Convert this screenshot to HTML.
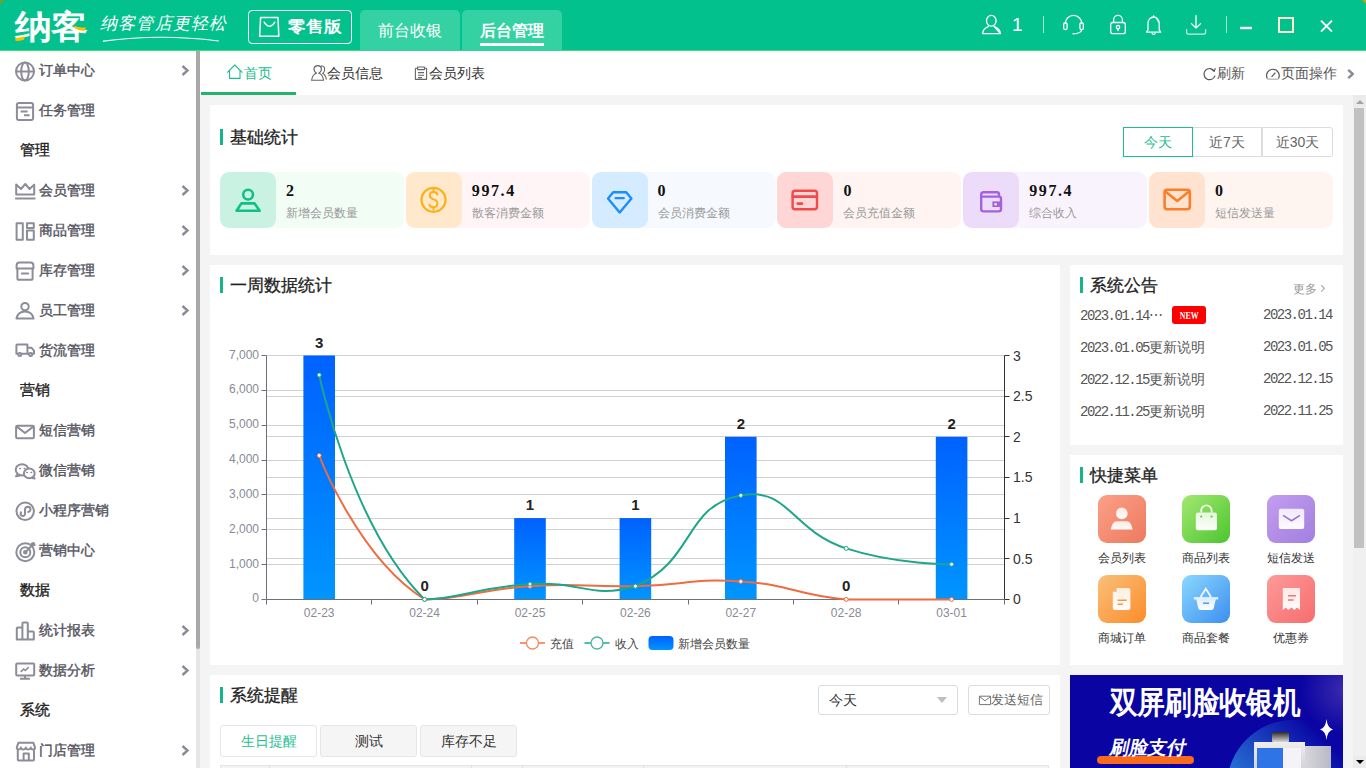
<!DOCTYPE html>
<html><head><meta charset="utf-8">
<style>
*{margin:0;padding:0;box-sizing:border-box}
html,body{width:1366px;height:768px;overflow:hidden;background:#f4f4f4;font-family:"Liberation Sans",sans-serif;color:#333}
.abs{position:absolute}
#hdr{position:absolute;left:0;top:0;width:1366px;height:51px;background:#02c18c;border-bottom:1px solid #45d978}
.logo{position:absolute;left:15px;top:7px;font-size:33px;font-weight:900;color:#fff;letter-spacing:-1px;line-height:40px;transform:scaleX(1.12);transform-origin:0 0}
.slogan{position:absolute;left:100px;top:12px;font-size:17px;color:#fff;letter-spacing:1.2px;font-style:italic;font-weight:300;line-height:24px;font-family:"Liberation Serif",serif}
.retail{position:absolute;left:248px;top:10px;width:104px;height:34px;border:1.5px solid #fff;border-radius:4px}
.retail span{position:absolute;left:39px;top:6px;font-size:16px;font-weight:900;color:#fff;line-height:20px;letter-spacing:0.5px;transform:scaleX(1.1);transform-origin:0 50%}
.htab{position:absolute;top:10px;width:100px;height:41px;background:#34d1a3;border-radius:5px 5px 0 0;color:#fff;font-size:16px;text-align:center;line-height:41px}
.side{position:absolute;left:0;top:51px;width:196px;height:717px;background:#fff}
.sb{position:absolute;left:196px;top:51px;width:4px;height:717px;background:#e6e6e6}
.sbt{position:absolute;left:196px;top:51px;width:4px;height:598px;background:#a9a9a9;border-radius:0 0 2px 2px}
.mi{position:absolute;left:39px;font-size:14px;font-weight:500;color:#55555f;line-height:20px;white-space:nowrap;-webkit-text-stroke:0.4px #55555f}
.ms{position:absolute;left:20px;font-size:15px;font-weight:500;color:#222;line-height:20px;-webkit-text-stroke:0.35px #222}
.chev{position:absolute;left:181px;width:9px;height:11px}
.ico{position:absolute;left:14px;width:22px;height:22px}
.tabs{position:absolute;left:200px;top:51px;width:1166px;height:44px;background:#fff}
.tab{position:absolute;top:12px;font-size:14px;color:#333;line-height:20px;white-space:nowrap}
.card{position:absolute;background:#fff}
.ttl{position:absolute;font-size:17px;font-weight:500;color:#222;line-height:20px;white-space:nowrap;margin-top:1px;-webkit-text-stroke:0.3px #222}
.bar{position:absolute;width:3px;height:16px;background:#13b589}
.stat{position:absolute;top:172px;width:184px;height:56px;border-radius:9px}
.stat .ib{position:absolute;left:0;top:0;width:56px;height:56px;border-radius:9px}
.stat .n{position:absolute;left:66px;top:11px;font-size:16px;letter-spacing:1.6px;font-weight:bold;color:#111;font-family:"Liberation Serif",serif;line-height:16px}
.stat .l{position:absolute;left:66px;top:33px;font-size:12px;color:#999;line-height:16px;white-space:nowrap}
.yl{position:absolute;left:200px;width:59px;text-align:right;font-size:12px;color:#8a8a96;line-height:16px}
.yr{position:absolute;left:1013px;font-size:14px;color:#333;line-height:18px}
.xl{position:absolute;top:605px;width:60px;text-align:center;font-size:12px;color:#8a8a96;line-height:16px}
.bl{position:absolute;width:40px;text-align:center;font-size:15px;font-weight:bold;color:#222;line-height:18px}
.lg{position:absolute;top:634.5px;font-size:12.3px;color:#444;line-height:18px;white-space:nowrap}
.ann i,.ann b{font-style:normal;font-weight:normal;letter-spacing:0;font-family:"Liberation Sans",sans-serif}
.ann{position:absolute;left:1080px;margin-top:0px;font-size:14px;color:#555;line-height:16px;font-family:"Liberation Mono",monospace;white-space:nowrap;letter-spacing:-1.5px}
.annd{position:absolute;left:1263px;margin-top:0px;font-size:14px;color:#555;line-height:16px;font-family:"Liberation Mono",monospace;white-space:nowrap;letter-spacing:-1.5px}
.qi{position:absolute;width:48px;height:48px;border-radius:9px}
.ql{position:absolute;margin-top:-1px;width:80px;text-align:center;font-size:12px;color:#333;line-height:16px}
.btn3{position:absolute;top:127px;height:30px;width:70px;border:1px solid #dcdcdc;font-size:14px;color:#666;text-align:center;line-height:28px;background:#fff}
</style></head><body>
<!-- HEADER -->
<div id="hdr">
  <div class="logo">纳客</div>
  <div class="slogan">纳客管店更轻松</div>
  <div class="retail"><span>零售版</span></div>
  <div class="htab" style="left:360px">前台收银</div>
  <div class="htab" style="left:462px;font-weight:bold">后台管理<div class="abs" style="left:18px;top:33px;width:64px;height:2.5px;background:#fff"></div></div>
  <div class="abs" style="left:1012px;top:13px;font-size:19px;color:#fff;line-height:24px">1</div>
  <div class="abs" style="left:1043px;top:16px;width:1px;height:17px;background:#bfeedd"></div>
  <div class="abs" style="left:1226px;top:16px;width:1px;height:17px;background:#bfeedd"></div>
</div>
<!-- SIDEBAR -->
<div class="side">
<div class="mi" style="top:9px">订单中心</div>
<svg class="chev" style="top:14px" viewBox="0 0 9 11"><path d="M1.5 1 L6.5 5.5 L1.5 10" fill="none" stroke="#8a8a98" stroke-width="2.4"/></svg>
<div class="mi" style="top:49px">任务管理</div>
<div class="ms" style="top:89px">管理</div>
<div class="mi" style="top:129px">会员管理</div>
<svg class="chev" style="top:134px" viewBox="0 0 9 11"><path d="M1.5 1 L6.5 5.5 L1.5 10" fill="none" stroke="#8a8a98" stroke-width="2.4"/></svg>
<div class="mi" style="top:169px">商品管理</div>
<svg class="chev" style="top:174px" viewBox="0 0 9 11"><path d="M1.5 1 L6.5 5.5 L1.5 10" fill="none" stroke="#8a8a98" stroke-width="2.4"/></svg>
<div class="mi" style="top:209px">库存管理</div>
<svg class="chev" style="top:214px" viewBox="0 0 9 11"><path d="M1.5 1 L6.5 5.5 L1.5 10" fill="none" stroke="#8a8a98" stroke-width="2.4"/></svg>
<div class="mi" style="top:249px">员工管理</div>
<svg class="chev" style="top:254px" viewBox="0 0 9 11"><path d="M1.5 1 L6.5 5.5 L1.5 10" fill="none" stroke="#8a8a98" stroke-width="2.4"/></svg>
<div class="mi" style="top:289px">货流管理</div>
<div class="ms" style="top:329px">营销</div>
<div class="mi" style="top:369px">短信营销</div>
<div class="mi" style="top:409px">微信营销</div>
<div class="mi" style="top:449px">小程序营销</div>
<div class="mi" style="top:489px">营销中心</div>
<div class="ms" style="top:529px">数据</div>
<div class="mi" style="top:569px">统计报表</div>
<svg class="chev" style="top:574px" viewBox="0 0 9 11"><path d="M1.5 1 L6.5 5.5 L1.5 10" fill="none" stroke="#8a8a98" stroke-width="2.4"/></svg>
<div class="mi" style="top:609px">数据分析</div>
<svg class="chev" style="top:614px" viewBox="0 0 9 11"><path d="M1.5 1 L6.5 5.5 L1.5 10" fill="none" stroke="#8a8a98" stroke-width="2.4"/></svg>
<div class="ms" style="top:649px">系统</div>
<div class="mi" style="top:689px">门店管理</div>
<svg class="chev" style="top:694px" viewBox="0 0 9 11"><path d="M1.5 1 L6.5 5.5 L1.5 10" fill="none" stroke="#8a8a98" stroke-width="2.4"/></svg>
</div>
<div class="sb"></div><div class="sbt"></div>
<!-- TABS -->
<div class="tabs">
  <div class="tab" style="left:44px;color:#1cbd8e">首页</div>
  <div class="abs" style="left:1px;top:41px;width:95px;height:3px;background:#22b46a"></div>
  <div class="tab" style="left:127px">会员信息</div>
  <div class="tab" style="left:229px">会员列表</div>
  <div class="tab" style="left:1017px;color:#555">刷新</div>
  <div class="tab" style="left:1080.5px;color:#555">页面操作</div>
</div>
<!-- CARD 1 -->
<div class="card" style="left:210px;top:105px;width:1133px;height:150px"></div>
<div class="bar" style="left:220px;top:129px"></div>
<div class="ttl" style="left:230px;top:127px">基础统计</div>
<div class="btn3" style="left:1123px;border-color:#1cbd8e;color:#1cbd8e;z-index:2">今天</div>
<div class="btn3" style="left:1192px;border-radius:0">近7天</div>
<div class="btn3" style="left:1262px;width:71px;border-radius:0 3px 3px 0">近30天</div>
<div class="stat" style="left:220.0px;background:#f2fdf5"><div class="ib" style="background:#c9f2e2"></div><div class="n">2</div><div class="l">新增会员数量</div></div>
<div class="stat" style="left:405.8px;background:#fff4f6"><div class="ib" style="background:#ffe8cc"></div><div class="n">997.4</div><div class="l">散客消费金额</div></div>
<div class="stat" style="left:591.6px;background:#f6faff"><div class="ib" style="background:#d5ebff"></div><div class="n">0</div><div class="l">会员消费金额</div></div>
<div class="stat" style="left:777.4px;background:#fff4f2"><div class="ib" style="background:#ffd6d6"></div><div class="n">0</div><div class="l">会员充值金额</div></div>
<div class="stat" style="left:963.2px;background:#f9f3fe"><div class="ib" style="background:#ecdcfa"></div><div class="n">997.4</div><div class="l">综合收入</div></div>
<div class="stat" style="left:1149.0px;background:#fff5f0"><div class="ib" style="background:#ffe2cf"></div><div class="n">0</div><div class="l">短信发送量</div></div>
<!-- CHART CARD -->
<div class="card" style="left:210px;top:265px;width:850px;height:400px"></div>
<div class="bar" style="left:220px;top:277px"></div>
<div class="ttl" style="left:230px;top:275px">一周数据统计</div>
<svg width="1366" height="768" style="position:absolute;left:0;top:0">
<defs><linearGradient id="bg" x1="0" y1="0" x2="0" y2="1"><stop offset="0" stop-color="#0061ff"/><stop offset="1" stop-color="#0095ff"/></linearGradient></defs>
<line x1="266.5" x2="1004.5" y1="564.5" y2="564.5" stroke="#d0d0d4" stroke-width="1"/>
<line x1="266.5" x2="1004.5" y1="529.5" y2="529.5" stroke="#d0d0d4" stroke-width="1"/>
<line x1="266.5" x2="1004.5" y1="494.5" y2="494.5" stroke="#d0d0d4" stroke-width="1"/>
<line x1="266.5" x2="1004.5" y1="460.5" y2="460.5" stroke="#d0d0d4" stroke-width="1"/>
<line x1="266.5" x2="1004.5" y1="425.5" y2="425.5" stroke="#d0d0d4" stroke-width="1"/>
<line x1="266.5" x2="1004.5" y1="390.5" y2="390.5" stroke="#d0d0d4" stroke-width="1"/>
<line x1="266.5" x2="1004.5" y1="355.5" y2="355.5" stroke="#d0d0d4" stroke-width="1"/>
<line x1="266.5" x2="1004.5" y1="558.5" y2="558.5" stroke="#d0d0d4" stroke-width="1"/>
<line x1="266.5" x2="1004.5" y1="518.5" y2="518.5" stroke="#d0d0d4" stroke-width="1"/>
<line x1="266.5" x2="1004.5" y1="477.5" y2="477.5" stroke="#d0d0d4" stroke-width="1"/>
<line x1="266.5" x2="1004.5" y1="436.5" y2="436.5" stroke="#d0d0d4" stroke-width="1"/>
<line x1="266.5" x2="1004.5" y1="396.5" y2="396.5" stroke="#d0d0d4" stroke-width="1"/>
<line x1="266.5" x2="1004.5" y1="355.5" y2="355.5" stroke="#d0d0d4" stroke-width="1"/>
<rect x="303.4" y="355.5" width="31.6" height="243.9" fill="url(#bg)"/>
<rect x="514.2" y="518.1" width="31.6" height="81.3" fill="url(#bg)"/>
<rect x="619.6" y="518.1" width="31.6" height="81.3" fill="url(#bg)"/>
<rect x="725.0" y="436.8" width="31.6" height="162.6" fill="url(#bg)"/>
<rect x="935.8" y="436.8" width="31.6" height="162.6" fill="url(#bg)"/>
<line x1="266.5" x2="266.5" y1="355.5" y2="599.4" stroke="#6e7079" stroke-width="1"/>
<line x1="266.5" x2="1004.5" y1="599.5" y2="599.5" stroke="#6e7079" stroke-width="1"/>
<line x1="1004.5" x2="1004.5" y1="355.5" y2="599.4" stroke="#333" stroke-width="1"/>
<line x1="261.5" x2="266.5" y1="599.5" y2="599.5" stroke="#6e7079"/>
<line x1="261.5" x2="266.5" y1="564.5" y2="564.5" stroke="#6e7079"/>
<line x1="261.5" x2="266.5" y1="529.5" y2="529.5" stroke="#6e7079"/>
<line x1="261.5" x2="266.5" y1="494.5" y2="494.5" stroke="#6e7079"/>
<line x1="261.5" x2="266.5" y1="460.5" y2="460.5" stroke="#6e7079"/>
<line x1="261.5" x2="266.5" y1="425.5" y2="425.5" stroke="#6e7079"/>
<line x1="261.5" x2="266.5" y1="390.5" y2="390.5" stroke="#6e7079"/>
<line x1="261.5" x2="266.5" y1="355.5" y2="355.5" stroke="#6e7079"/>
<line x1="1004.5" x2="1009.5" y1="599.5" y2="599.5" stroke="#333"/>
<line x1="1004.5" x2="1009.5" y1="558.5" y2="558.5" stroke="#333"/>
<line x1="1004.5" x2="1009.5" y1="518.5" y2="518.5" stroke="#333"/>
<line x1="1004.5" x2="1009.5" y1="477.5" y2="477.5" stroke="#333"/>
<line x1="1004.5" x2="1009.5" y1="436.5" y2="436.5" stroke="#333"/>
<line x1="1004.5" x2="1009.5" y1="396.5" y2="396.5" stroke="#333"/>
<line x1="1004.5" x2="1009.5" y1="355.5" y2="355.5" stroke="#333"/>
<line x1="266.5" x2="266.5" y1="599.5" y2="604.5" stroke="#6e7079"/>
<line x1="371.5" x2="371.5" y1="599.5" y2="604.5" stroke="#6e7079"/>
<line x1="477.5" x2="477.5" y1="599.5" y2="604.5" stroke="#6e7079"/>
<line x1="582.5" x2="582.5" y1="599.5" y2="604.5" stroke="#6e7079"/>
<line x1="688.5" x2="688.5" y1="599.5" y2="604.5" stroke="#6e7079"/>
<line x1="793.5" x2="793.5" y1="599.5" y2="604.5" stroke="#6e7079"/>
<line x1="898.5" x2="898.5" y1="599.5" y2="604.5" stroke="#6e7079"/>
<line x1="1004.5" x2="1004.5" y1="599.5" y2="604.5" stroke="#6e7079"/>
<path d="M319.20 455.50 C319.20 455.50 358.54 558.44 424.60 599.40 C463.94 599.40 477.09 589.51 530.00 586.20 C582.49 582.91 582.73 587.37 635.40 586.20 C688.13 585.02 688.45 578.22 740.80 581.50 C793.85 584.82 793.13 594.89 846.20 599.40 C898.53 599.40 951.60 599.40 951.60 599.40" fill="none" stroke="#ee6c3e" stroke-width="2"/>
<path d="M319.20 375.00 C319.20 375.00 350.87 526.27 424.60 599.40 C456.27 599.40 477.03 587.42 530.00 584.10 C582.43 580.82 589.96 599.40 635.40 586.20 C695.36 560.97 683.77 505.63 740.80 495.40 C789.17 486.73 790.83 530.30 846.20 548.40 C896.23 564.75 951.60 564.30 951.60 564.30" fill="none" stroke="#1ea68a" stroke-width="2"/>
<circle cx="319.2" cy="455.5" r="2" fill="#fff" stroke="#ee6c3e" stroke-width="1"/>
<circle cx="319.2" cy="375" r="2" fill="#fff" stroke="#1ea68a" stroke-width="1"/>
<circle cx="424.6" cy="599.4" r="2" fill="#fff" stroke="#ee6c3e" stroke-width="1"/>
<circle cx="424.6" cy="599.4" r="2" fill="#fff" stroke="#1ea68a" stroke-width="1"/>
<circle cx="530.0" cy="586.2" r="2" fill="#fff" stroke="#ee6c3e" stroke-width="1"/>
<circle cx="530.0" cy="584.1" r="2" fill="#fff" stroke="#1ea68a" stroke-width="1"/>
<circle cx="635.4" cy="586.2" r="2" fill="#fff" stroke="#ee6c3e" stroke-width="1"/>
<circle cx="635.4" cy="586.2" r="2" fill="#fff" stroke="#1ea68a" stroke-width="1"/>
<circle cx="740.8" cy="581.5" r="2" fill="#fff" stroke="#ee6c3e" stroke-width="1"/>
<circle cx="740.8" cy="495.4" r="2" fill="#fff" stroke="#1ea68a" stroke-width="1"/>
<circle cx="846.2" cy="599.4" r="2" fill="#fff" stroke="#ee6c3e" stroke-width="1"/>
<circle cx="846.2" cy="548.4" r="2" fill="#fff" stroke="#1ea68a" stroke-width="1"/>
<circle cx="951.6" cy="599.4" r="2" fill="#fff" stroke="#ee6c3e" stroke-width="1"/>
<circle cx="951.6" cy="564.3" r="2" fill="#fff" stroke="#1ea68a" stroke-width="1"/>
<line x1="520" x2="545" y1="643" y2="643" stroke="#f58a62" stroke-width="1.8"/><circle cx="532.5" cy="643" r="6" fill="#fff" stroke="#f58a62" stroke-width="1.3"/>
<line x1="584.5" x2="609.5" y1="643" y2="643" stroke="#45b89e" stroke-width="1.8"/><circle cx="597" cy="643" r="6" fill="#fff" stroke="#45b89e" stroke-width="1.3"/>
<rect x="648.5" y="636" width="25" height="14" rx="4" fill="url(#bg)"/>
</svg>
<div class="yl" style="top:590.4px">0</div>
<div class="yl" style="top:555.6px">1,000</div>
<div class="yl" style="top:520.7px">2,000</div>
<div class="yl" style="top:485.9px">3,000</div>
<div class="yl" style="top:451.0px">4,000</div>
<div class="yl" style="top:416.2px">5,000</div>
<div class="yl" style="top:381.3px">6,000</div>
<div class="yl" style="top:346.5px">7,000</div>
<div class="yr" style="top:590.4px">0</div>
<div class="yr" style="top:549.8px">0.5</div>
<div class="yr" style="top:509.1px">1</div>
<div class="yr" style="top:468.4px">1.5</div>
<div class="yr" style="top:427.8px">2</div>
<div class="yr" style="top:387.1px">2.5</div>
<div class="yr" style="top:346.5px">3</div>
<div class="xl" style="left:289.2px">02-23</div>
<div class="xl" style="left:394.6px">02-24</div>
<div class="xl" style="left:500.0px">02-25</div>
<div class="xl" style="left:605.4px">02-26</div>
<div class="xl" style="left:710.8px">02-27</div>
<div class="xl" style="left:816.2px">02-28</div>
<div class="xl" style="left:921.6px">03-01</div>
<div class="bl" style="left:299.2px;top:333.5px">3</div>
<div class="bl" style="left:404.6px;top:577.4px">0</div>
<div class="bl" style="left:510.0px;top:496.1px">1</div>
<div class="bl" style="left:615.4px;top:496.1px">1</div>
<div class="bl" style="left:720.8px;top:414.8px">2</div>
<div class="bl" style="left:826.2px;top:577.4px">0</div>
<div class="bl" style="left:931.6px;top:414.8px">2</div>
<div class="lg" style="left:550px">充值</div><div class="lg" style="left:615px">收入</div><div class="lg" style="left:678px">新增会员数量</div>
<!-- ANNOUNCE -->
<div class="card" style="left:1070px;top:265px;width:273px;height:180px"></div>
<div class="bar" style="left:1080px;top:277px"></div>
<div class="ttl" style="left:1090px;top:275px">系统公告</div>
<div class="abs" style="left:1293px;top:281px;font-size:12px;color:#999;line-height:16px">更多</div>
<div class="ann" style="top:307px">2023.01.14<i>⋯</i></div>
<div class="abs" style="left:1172px;top:306px;width:34px;height:18px;background:#f00;border-radius:3px;color:#fff;font-size:11px;font-weight:bold;text-align:center;line-height:18px;font-family:'Liberation Serif',serif"><span style="display:inline-block;transform:scaleX(0.72)">NEW</span></div>
<div class="annd" style="top:307px">2023.01.14</div>
<div class="ann" style="top:339px">2023.01.05<i>更新说明</i></div><div class="annd" style="top:339px">2023.01.05</div>
<div class="ann" style="top:371px">2022.12.15<i>更新说明</i></div><div class="annd" style="top:371px">2022.12.15</div>
<div class="ann" style="top:403px">2022.11.25<i>更新说明</i></div><div class="annd" style="top:403px">2022.11.25</div>
<!-- QUICK -->
<div class="card" style="left:1070px;top:455px;width:273px;height:210px"></div>
<div class="bar" style="left:1080px;top:467px"></div>
<div class="ttl" style="left:1090px;top:465px">快捷菜单</div>
<div class="qi" style="left:1098px;top:495px;background:linear-gradient(135deg,#fca088,#ec7a5e)"></div><div class="ql" style="left:1082px;top:551px">会员列表</div>
<div class="qi" style="left:1182px;top:495px;background:linear-gradient(135deg,#a3e872,#4cc52e)"></div><div class="ql" style="left:1166px;top:551px">商品列表</div>
<div class="qi" style="left:1267px;top:495px;background:linear-gradient(135deg,#c39df0,#a27fe0)"></div><div class="ql" style="left:1251px;top:551px">短信发送</div>
<div class="qi" style="left:1098px;top:575px;background:linear-gradient(135deg,#f9c07a,#fc8c2a)"></div><div class="ql" style="left:1082px;top:631px">商城订单</div>
<div class="qi" style="left:1182px;top:575px;background:linear-gradient(135deg,#8bd8ff,#3b8ef0)"></div><div class="ql" style="left:1166px;top:631px">商品套餐</div>
<div class="qi" style="left:1267px;top:575px;background:linear-gradient(135deg,#fd9a9a,#f76d6d)"></div><div class="ql" style="left:1251px;top:631px">优惠券</div>
<!-- REMIND -->
<div class="card" style="left:210px;top:675px;width:850px;height:93px"></div>
<div class="bar" style="left:220px;top:687px"></div>
<div class="ttl" style="left:230px;top:685px">系统提醒</div>
<div class="abs" style="left:220px;top:725px;width:97px;height:32px;border:1px solid #e6e6e6;border-radius:3px;background:#fff;color:#1dbf8f;font-size:14px;text-align:center;line-height:30px">生日提醒</div>
<div class="abs" style="left:320px;top:725px;width:97px;height:32px;border:1px solid #e6e6e6;border-radius:3px;background:#f5f5f5;color:#333;font-size:14px;text-align:center;line-height:30px">测试</div>
<div class="abs" style="left:420px;top:725px;width:97px;height:32px;border:1px solid #e6e6e6;border-radius:3px;background:#f5f5f5;color:#333;font-size:14px;text-align:center;line-height:30px">库存不足</div>
<div class="abs" style="left:818px;top:685px;width:140px;height:30px;border:1px solid #dcdcdc;border-radius:3px;background:#fff;color:#333;font-size:14px;line-height:28px;padding-left:10px">今天</div>
<div class="abs" style="left:937px;top:697px;width:0;height:0;border-left:5.5px solid transparent;border-right:5.5px solid transparent;border-top:6px solid #bdbdbd"></div>
<div class="abs" style="left:968px;top:685px;width:82px;height:30px;border:1px solid #dcdcdc;border-radius:3px;background:#fff;color:#666;font-size:13px;line-height:28px;padding-left:22px">发送短信</div>
<div class="abs" style="left:220px;top:765px;width:829px;height:10px;background:#f3f3f3;border:1px solid #e4e4e4"></div>
<div class="abs" style="left:269px;top:765px;width:1px;height:5px;background:#e0e0e0"></div>
<div class="abs" style="left:471px;top:765px;width:1px;height:5px;background:#e0e0e0"></div>
<div class="abs" style="left:522px;top:765px;width:1px;height:5px;background:#e0e0e0"></div>
<div class="abs" style="left:643px;top:765px;width:1px;height:5px;background:#e0e0e0"></div>
<div class="abs" style="left:846px;top:765px;width:1px;height:5px;background:#e0e0e0"></div>
<!-- BANNER -->
<div class="abs" style="left:1070px;top:675px;width:273px;height:93px;background:#0a04a2;overflow:hidden">
  <div class="abs" style="left:230px;top:-30px;width:90px;height:90px;border-radius:50%;background:radial-gradient(circle,rgba(120,90,190,0.45) 0%,rgba(10,5,164,0) 70%)"></div>
  <div class="abs" style="left:157.4px;top:45px;width:132.6px;height:132.6px;border-radius:50%;background:linear-gradient(225deg,rgba(10,5,164,1) 20%,#1f56c8 55%,#2c93e4 85%)"></div>
  <div class="abs" style="left:40px;top:10px;font-size:28px;font-weight:900;color:#fff;line-height:36px;letter-spacing:-0.8px;white-space:nowrap;transform:scaleY(1.12);transform-origin:0 50%">双屏刷脸收银机</div>
  <div class="abs" style="left:27px;top:81px;width:97px;height:8px;border-radius:4px;background:#fa6a1c"></div>
  <div class="abs" style="left:40px;top:60px;font-size:19px;font-weight:900;color:#fff;line-height:26px;white-space:nowrap;transform:skewX(-12deg)">刷脸支付</div>
  <div class="abs" style="left:202px;top:57px;width:17px;height:10px;background:linear-gradient(180deg,#2a2a2a,#d8d8d8);border-radius:1px"></div>
  <div class="abs" style="left:183.5px;top:66.5px;width:51.5px;height:30px;background:linear-gradient(180deg,#eeeeee,#cfcfd6)"></div>
  <div class="abs" style="left:186.5px;top:73.3px;width:26.3px;height:22px;background:#2f74e6"></div>
  <div class="abs" style="left:212.8px;top:73.3px;width:18px;height:22px;background:#f4f4f8"></div>
  <div class="abs" style="left:235px;top:71.4px;width:26px;height:24px;background:linear-gradient(90deg,#d6d6dc,#b9b9c6)"></div>
  <svg class="abs" style="left:249.6px;top:43.8px" width="13" height="21" viewBox="0 0 13 21"><path d="M6.5 0 Q7.3 9 13 10.5 Q7.3 12 6.5 21 Q5.7 12 0 10.5 Q5.7 9 6.5 0Z" fill="#fff"/></svg>
</div>
<!-- SCROLLBAR -->
<div class="abs" style="left:1353px;top:95px;width:13px;height:673px;background:#f0f0f0"></div>
<div class="abs" style="left:1353px;top:95px;width:13px;height:12px;background:#ebebeb"></div>
<div class="abs" style="left:1355.5px;top:100px;width:0;height:0;border-left:4px solid transparent;border-right:4px solid transparent;border-bottom:4px solid #a3a3a3"></div>
<div class="abs" style="left:1354px;top:108px;width:10px;height:440px;background:#c1c1c1"></div>
<div class="abs" style="left:1353px;top:756px;width:13px;height:12px;background:#ebebeb"></div>
<div class="abs" style="left:1355.5px;top:760px;width:0;height:0;border-left:4px solid transparent;border-right:4px solid transparent;border-top:4px solid #000"></div>
<svg width="1366" height="768" style="position:absolute;left:0;top:0;z-index:5;pointer-events:none">
<defs>
<linearGradient id="qg1" x1="0" y1="0" x2="0" y2="1"><stop offset="0" stop-color="#fff" stop-opacity="0.95"/><stop offset="1" stop-color="#fff" stop-opacity="0.75"/></linearGradient>
</defs>
<!-- logo accents -->
<path d="M15.6 37.6 Q20 38 24.8 36.2 L24 39.8 Q19.6 41.4 15.4 40.8 Z" fill="#f9c000"/>
<path d="M74.2 25.6 Q79 28.4 85.8 27.2 L85 30.6 Q79.4 31.4 75.2 28.2 Z" fill="#f9c000"/>
<path d="M103.4 41.2 Q160 33.4 218.4 41" fill="none" stroke="#fff" stroke-width="1.2" stroke-linecap="round"/>
<path d="M1366 0 L1362 0 L1366 4 Z" fill="#c8a000"/>
<path d="M0 0 L4 0 L0 4 Z" fill="#8a9a20"/>
<!-- header icons -->
<g fill="none" stroke="#fff" stroke-width="1.3" stroke-linejoin="round" stroke-linecap="round">
  <path d="M260.6 17.6 H278 L278.8 36.3 H259.6 Z" stroke-width="1.5"/>
  <path d="M264.2 22.2 Q269.5 30.5 274.8 22.2" stroke-width="1.5"/>
  <!-- user -->
  <ellipse cx="991.3" cy="20.8" rx="4.8" ry="5.4"/>
  <path d="M982.6 33.6 C982.8 29.6 985.6 27.6 988.6 26.4 M994 26.4 C997 27.6 1000.2 29.6 1000.4 33.6 Z M982.6 33.6 H1000.4"/>
  <!-- headset -->
  <path d="M1065.3 23.5 A8.2 8.2 0 0 1 1081.7 23.5"/>
  <rect x="1063.7" y="22.6" width="3.4" height="7" rx="1.7"/>
  <rect x="1079.9" y="22.6" width="3.4" height="7" rx="1.7"/>
  <path d="M1081.6 29.8 Q1081.2 33.6 1073 33.8"/>
  <!-- lock -->
  <path d="M1113.6 22.4 V19.8 A4.4 4.4 0 0 1 1122.4 19.8 V22.4"/>
  <rect x="1110.7" y="22.5" width="14.6" height="11.2" rx="2.2"/>
  <circle cx="1118" cy="27.2" r="1.7"/>
  <path d="M1118 28.9 V30.6"/>
  <!-- bell -->
  <path d="M1146.6 32.2 H1160.6 L1159.2 29.8 V23.2 A5.6 6.2 0 0 0 1148 23.2 V29.8 Z"/>
  <path d="M1153.6 15.8 V17"/>
  <path d="M1152.2 33.6 Q1153.6 35.2 1155 33.6"/>
  <path d="M1156.8 19.6 Q1158 20.6 1158.3 22" stroke-width="1"/>
  <!-- download -->
  <path d="M1196 15.6 V28 M1191.4 23.6 L1196 28 L1200.6 23.6"/>
  <path d="M1186.6 29.6 V32.4 Q1186.6 34.1 1188.4 34.1 H1203.8 Q1205.6 34.1 1205.6 32.4 V29.6" stroke="#c8f0e0"/>
</g>
<path d="M1043.5 16 V32.5 M1226.5 16 V32.5" stroke="#a8e6cf" stroke-width="1"/>
<rect x="1240" y="26.8" width="12" height="2.4" fill="#fff"/>
<rect x="1279" y="18" width="14" height="14" fill="none" stroke="#fff8d4" stroke-width="2"/>
<path d="M1321 20.6 L1332 31.6 M1332 20.6 L1321 31.6" stroke="#fff" stroke-width="2"/>
<!-- sidebar icons -->
<g fill="none" stroke="#8c8c9a" stroke-width="2" stroke-linejoin="round">
  <circle cx="25" cy="71.5" r="9"/>
  <ellipse cx="25" cy="71.5" rx="3.8" ry="9"/>
  <path d="M16 71.5 H34"/>
  <rect x="16.9" y="102.9" width="16.2" height="17" rx="2"/>
  <path d="M16.9 107.4 H33.1 M20.6 111.6 H27.6 M24 115.2 H29.6"/>
  <path d="M16.2 194.4 V184.6 L21 189 L25.3 184 L29.6 189 L34.2 184.6 V194.4 Z"/>
  <path d="M16 198.5 H34.6" stroke-width="2.2" stroke-linecap="round"/>
  <rect x="16.6" y="223.3" width="6.2" height="16.4"/>
  <rect x="27" y="223.3" width="6.8" height="4.6"/>
  <rect x="27" y="230.6" width="6.8" height="9.1"/>
  <path d="M16.6 268.4 V265.5 Q16.6 262.6 19.5 262.6 H30.5 Q33.4 262.6 33.4 265.5 V268.4 Z"/>
  <path d="M17.4 268.4 V278.2 Q17.4 279.8 19 279.8 H31 Q32.6 279.8 32.6 278.2 V268.4"/>
  <path d="M21.8 273.6 H28.2" stroke-width="2" stroke-linecap="round"/>
  <circle cx="25" cy="306.6" r="3.7"/>
  <path d="M16.4 318.6 Q18 311.6 25 311.6 Q32 311.6 33.6 318.6 Z"/>
  <path d="M16.4 353.8 V345.6 Q16.4 344.6 17.4 344.6 H27.4 V353.8 Z"/>
  <path d="M27.4 347.8 H31.6 L34 350.6 V353.8 H27.4"/>
  <circle cx="19.8" cy="354.6" r="1.5" fill="#fff"/>
  <circle cx="30.6" cy="354.6" r="1.5" fill="#fff"/>
  <rect x="16.1" y="425.8" width="17.8" height="12.4" rx="1.2"/>
  <path d="M16.4 426.4 L25 433 L33.6 426.4"/>
  <ellipse cx="22" cy="469.8" rx="6.3" ry="5.6"/><path d="M18 474.2 L16 476.2 L20 475.4"/>
  <ellipse cx="29.3" cy="473.4" rx="5.4" ry="4.9" fill="#fff"/>
  <path d="M33.2 476.8 L34.6 478.6 L31.6 477.8"/>
  <path d="M19.8 468.4 H20.4 M24.2 468.4 H24.8 M26.8 472.4 H27.4 M31 472.4 H31.6" stroke-width="1.5" stroke-linecap="round"/>
  <circle cx="25.2" cy="511.3" r="8.7"/>
  <path d="M21 512.4 Q19.8 515.8 22.6 516 Q25 516.1 25 513.2 V509.6 Q25.2 506.8 27.9 506.8 Q30.6 507 30.5 509.4 Q30.3 511.6 28.2 511.9" stroke-linecap="round"/>
  <circle cx="25.3" cy="552.2" r="9"/>
  <circle cx="25.3" cy="552.2" r="5"/>
  <circle cx="25.3" cy="552.2" r="1.3" fill="#8c8c9a"/>
  <path d="M25.3 552.2 L32.8 544.6"/>
  <path d="M31.6 543.6 L33.6 543 L34.6 545 L32.8 545.6 Z" fill="#8c8c9a"/>
  <path d="M16.8 639.4 V628.6 Q16.8 627.6 17.8 627.6 H22.4 V623.6 Q22.4 622.6 23.4 622.6 H26.8 Q27.8 622.6 27.8 623.6 V631.6 H32.8 Q33.8 631.6 33.8 632.6 V639.4 Z M22.4 627.6 V639.4 M27.8 631.6 V639.4"/>
  <rect x="16.2" y="663.4" width="18" height="12" rx="1"/>
  <path d="M25 675.4 V678.6 M19.9 678.8 H29.9"/>
  <path d="M20.8 671.8 L23.7 669 L25.3 670.5 L28.7 667.2" stroke-width="1.7"/>
  <path d="M17.8 749.6 V759.6 Q17.8 760.6 18.8 760.6 H33 Q34 760.6 34 759.6 V749.6 M18.4 742.8 H33.4 L35 747.4 Q35 749.4 33.2 749.4 Q31 749.4 30.8 747.6 Q30.4 749.4 28.4 749.4 Q26.2 749.4 25.8 747.6 Q25.4 749.4 23.2 749.4 Q21 749.4 20.8 747.6 Q20.4 749.4 18.6 749.4 Q16.8 749.4 16.8 747.4 Z M23.6 760.6 V753.6 H28.8 V760.6"/>
</g>
<!-- tab icons -->
<g fill="none" stroke-width="1.1" stroke-linejoin="round">
  <path d="M227.2 72.6 L234.8 65 L242.4 72.6 M229.6 70.4 V78.4 H240 V70.4" stroke="#1dbf8f"/>
  <path d="M311.6 80.2 Q312.4 74.2 316.6 73.2 Q313.6 71 314 68.6 Q314.6 65.6 317.8 65.6 Q321 65.6 321.4 68.6 Q321.8 71.2 318.8 73.2 Q322.6 74.2 323.6 80.2 Z M321 65.8 Q325 66 324.6 70 Q324.4 72.4 322.6 73.4 Q325.6 74.4 326.4 79.6" stroke="#666"/>
  <path d="M415.4 68.2 H417.4 M424.6 68.2 H426.6 V79.4 H415.4 V68.2 M417.6 67 H424.4 V69.6 H417.6 Z M418 72.6 H424 M418 75.2 H424 M418 77.6 H422" stroke="#666"/>
  <path d="M1214.4 71.2 A5.6 5.6 0 1 0 1215 75.6" stroke="#555" stroke-width="1.2"/>
  <path d="M1211.4 69.2 L1214.2 71.4 L1215.4 68.2" stroke="#555" stroke-width="1.1"/>
  <path d="M1267.4 78.6 A6.3 6.3 0 1 1 1278.4 78.6" stroke="#555" stroke-width="1.2"/><path d="M1267.4 79.2 H1278.4" stroke="#bbb" stroke-width="1.4"/><path d="M1271.6 76.8 L1275.4 72.6" stroke="#555" stroke-width="1.2"/>
  <path d="M1348.2 69.8 L1352.8 74 L1348.2 78.2" stroke="#8a8a98" stroke-width="2.4"/>
  <path d="M1321.2 285.2 L1324.4 288.4 L1321.2 291.6" stroke="#aaa" stroke-width="1.2"/>
</g>

<path d="M979.4 696.2 H990.6 V704.6 H979.4 Z M979.6 696.6 L985 700.8 L990.4 696.6" fill="none" stroke="#777" stroke-width="1"/>
<!-- stat icons -->
<g fill="none" stroke-linejoin="round" stroke-linecap="round">
  <circle cx="248.1" cy="194.6" r="4.9" stroke="#12bf88" stroke-width="2.6"/>
  <path d="M241.4 203.4 H254.6 L259.6 210.8 H236.6 Z" stroke="#12bf88" stroke-width="2.6"/>
  <circle cx="433.5" cy="199.8" r="12" stroke="#fbb117" stroke-width="2.3"/>
  <path d="M437.4 194.6 Q436.6 192 433.5 192 Q429.6 192 429.8 195.6 Q430 198.2 433.6 199.4 Q437.6 200.6 437.4 203.8 Q437.2 207.2 433.4 207.2 Q430.2 207.2 429.4 204.6 M433.5 189.6 V192 M433.5 207.2 V209.8" stroke="#fbb117" stroke-width="2"/>
  <path d="M613.2 192.2 H626.2 L631.4 198.4 L619.7 212.4 L608 198.4 Z" stroke="#1a8dff" stroke-width="2.4"/>
  <path d="M615.6 198.2 H623.8" stroke="#1a8dff" stroke-width="2.2"/>
  <rect x="792.6" y="190.8" width="24.4" height="18.4" rx="2.4" stroke="#f24a4a" stroke-width="2.4"/>
  <path d="M792.6 196.6 H817 M797.6 203.6 H802" stroke="#f24a4a" stroke-width="2.6"/>
  <path d="M999 196.6 V194.4 Q999 192.2 996.8 192.2 H983.6 Q981.2 192.2 981.2 194.6 V209 Q981.2 211.4 983.6 211.4 H998.6 Q1001 211.4 1001 209 V198.6 Q1001 196.6 999 196.6 H983" stroke="#a461dd" stroke-width="2.4"/>
  <rect x="992.4" y="201.4" width="8.6" height="5.6" fill="#a461dd" stroke="none"/>
  <circle cx="995.6" cy="204.2" r="1.3" fill="#f0e4fb" stroke="none"/>
  <rect x="1164.6" y="189.8" width="25.2" height="19.4" rx="2.4" stroke="#fb7f2a" stroke-width="2.6"/>
  <path d="M1165.4 191.6 L1177.2 201 L1189 191.6" stroke="#fb7f2a" stroke-width="2.6"/>
</g>
<!-- quick icons -->
<defs>
<linearGradient id="wg" x1="0" y1="0" x2="0" y2="1"><stop offset="0" stop-color="#fff" stop-opacity="0.8"/><stop offset="1" stop-color="#fff" stop-opacity="0.98"/></linearGradient>
<linearGradient id="wg2" x1="0" y1="0" x2="0" y2="1"><stop offset="0" stop-color="#fff" stop-opacity="0.75"/><stop offset="1" stop-color="#fff" stop-opacity="1"/></linearGradient>
</defs>
<g fill="url(#wg)">
  <circle cx="1121.8" cy="513.4" r="5.8"/>
  <path d="M1116.6 521.2 H1127 Q1131 521.2 1132.6 529.6 H1110.8 Q1112.4 521.2 1116.6 521.2 Z"/>
  <path d="M1201.2 512.6 V510.6 A5.2 5.2 0 0 1 1211.6 510.6 V512.6" fill="none" stroke="#f2fcef" stroke-width="1.8"/>
  <rect x="1195.8" y="512.6" width="21.2" height="17.6" rx="2"/>
  <circle cx="1201.2" cy="516.6" r="1.1" fill="#5fcc45"/>
  <circle cx="1211.6" cy="516.6" r="1.1" fill="#5fcc45"/>
  <rect x="1278.8" y="508.8" width="25.4" height="20.2" rx="2"/>
  <path d="M1283 515.4 L1291.5 520.8 L1300 515.4" fill="none" stroke="#9b72d8" stroke-width="1.6"/>
  <path d="M1116.6 588 H1128.4 Q1130.4 588 1130.4 590 V608 Q1130.4 610 1128.4 610 H1114.8 Q1112.8 610 1112.8 608 V591.8 Z"/>
  <path d="M1116.6 588 V591.8 H1112.8 Z" fill="#e09a55" fill-opacity="0.7"/>
  <path d="M1117.6 600.2 H1126.8 M1117.6 604.2 H1122.8" stroke="#f19a46" stroke-width="1.5"/>
  <path d="M1200.6 597 L1205.8 588.8 L1211 597" fill="none" stroke="#f0f8ff" stroke-width="1.8"/>
  <path d="M1193.8 597 H1218.2 V599.4 H1215.8 L1213.6 608.6 Q1213.3 610 1211.8 610 H1200.2 Q1198.7 610 1198.4 608.6 L1196.2 599.4 H1193.8 Z" fill="url(#wg2)"/>
  <path d="M1203 603.2 H1209" stroke="#4d9ff0" stroke-width="1.5"/>
  <path d="M1282.8 588 H1300 V610 L1297.2 607.4 L1294.4 610 L1291.4 607.4 L1288.4 610 L1285.6 607.4 L1282.8 610 Z"/>
  <path d="M1288 595.8 H1296 M1288 600 H1293.6" stroke="#f27272" stroke-width="1.5"/>
</g>
</svg>

</body></html>
